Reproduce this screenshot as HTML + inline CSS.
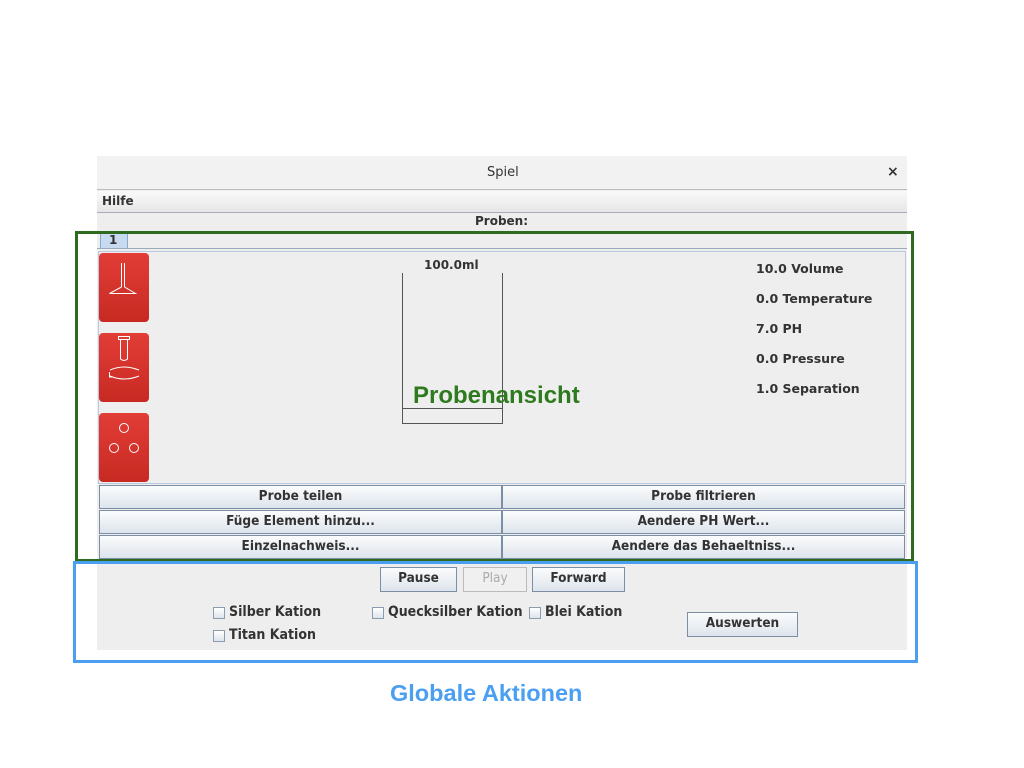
<!DOCTYPE html><html><head><style>
*{margin:0;padding:0;box-sizing:border-box}
body{width:1024px;height:768px;background:#fff;position:relative;overflow:hidden;font-family:"DejaVu Sans","Liberation Sans",sans-serif;font-size:12px;color:#222}
.a{position:absolute}
.t{font-weight:bold;font-size:12px;color:#333;white-space:nowrap}
.btn{position:absolute;background:linear-gradient(#fbfcfd,#dde4ec);border:1px solid #7b8ea3;text-align:center;font-weight:bold;font-size:13.5px;line-height:21px;color:#333;font-family:"DejaVu Sans Condensed","DejaVu Sans",sans-serif}
.red{position:absolute;left:99px;width:50px;height:69px;border-radius:4px;background:linear-gradient(#e23d37,#c72a22)}
.cb{position:absolute;width:12px;height:12px;border:1px solid #8b9bb0;background:linear-gradient(#fff,#dde4ec)}
.lbl{position:absolute;font-weight:bold;font-size:14px;color:#333;font-family:"DejaVu Sans Condensed","DejaVu Sans",sans-serif;white-space:nowrap}
</style></head><body>
<div class="a" style="left:97px;top:156px;width:810px;height:494px;background:#eeeeee"></div>
<div class="a" style="left:97px;top:156px;width:810px;height:34px;background:#f2f2f2;border-bottom:1px solid #bbb"></div>
<div class="a t" style="left:487px;top:165px;font-weight:normal;font-size:13px">Spiel</div>
<div class="a t" style="left:887px;top:164px;font-size:14px">×</div>
<div class="a" style="left:97px;top:191px;width:810px;height:22px;background:linear-gradient(#fafafa,#e6e6e6);border-bottom:1px solid #aab"></div>
<div class="a t" style="left:102px;top:194px">Hilfe</div>
<div class="a t" style="left:475px;top:214px">Proben:</div>
<div class="a" style="left:100px;top:233px;width:28px;height:16px;background:#c8daf0;border:1px solid #8aa8cc;border-bottom:none"></div>
<div class="a t" style="left:109px;top:233px">1</div>
<div class="a" style="left:97px;top:248px;width:810px;height:1px;background:#9ab"></div>
<div class="a" style="left:98px;top:251px;width:808px;height:233px;border:1px solid #b8c8e0;background:#eeeeee"></div>
<div class="red" style="top:253px"></div>
<div class="red" style="top:333px"></div>
<div class="red" style="top:413px"></div>
<svg class="a" style="left:0;top:0" width="1024" height="768" fill="none" stroke="#fff" stroke-width="1">
<path d="M121.5 263V287M124.5 263V287M121.5 287L109.5 293.5H135.5L124.5 287"/>
<path d="M118.5 336.5H129.5V339.5H118.5ZM120.5 339.5V359Q124 362 127.5 359V339.5"/>
<path d="M110 370Q124 364 139 370M139 370L134 368.5M110 376Q124 382 139 376M109.5 372V377H113"/>
<circle cx="124" cy="428" r="4.5"/><circle cx="114" cy="448" r="4.5"/><circle cx="134" cy="448" r="4.5"/>
<g stroke="#555"><path d="M402.5 273V423.5H502.5V273M402.5 408.5H502.5"/></g>
<rect x="76.5" y="232.5" width="836" height="328" stroke="#2e6b1e" stroke-width="3"/>
<rect x="74.5" y="562.5" width="842" height="99" stroke="#4a9ff0" stroke-width="3"/>
</svg>
<div class="a t" style="left:424px;top:258px">100.0ml</div>
<div class="a" style="left:413px;top:382px;font-family:'Liberation Sans',sans-serif;font-weight:bold;font-size:24px;color:#2e7a1e">Probenansicht</div>
<div class="a t" style="left:756px;top:254px;line-height:30px;font-size:12.5px">10.0 Volume<br>0.0 Temperature<br>7.0 PH<br>0.0 Pressure<br>1.0 Separation</div>
<div class="btn" style="left:99px;top:485px;width:403px;height:24px">Probe teilen</div>
<div class="btn" style="left:502px;top:485px;width:403px;height:24px">Probe filtrieren</div>
<div class="btn" style="left:99px;top:510px;width:403px;height:24px">Füge Element hinzu...</div>
<div class="btn" style="left:502px;top:510px;width:403px;height:24px">Aendere PH Wert...</div>
<div class="btn" style="left:99px;top:535px;width:403px;height:24px">Einzelnachweis...</div>
<div class="btn" style="left:502px;top:535px;width:403px;height:24px">Aendere das Behaeltniss...</div>
<div class="btn" style="left:380px;top:567px;width:77px;height:25px">Pause</div>
<div class="btn" style="left:463px;top:567px;width:64px;height:25px;background:#f0f0f0;border-color:#bbb;color:#aaa;font-weight:normal">Play</div>
<div class="btn" style="left:532px;top:567px;width:93px;height:25px">Forward</div>
<div class="btn" style="left:687px;top:612px;width:111px;height:25px">Auswerten</div>
<div class="cb" style="left:213px;top:607px"></div><div class="lbl" style="left:229px;top:604px">Silber Kation</div>
<div class="cb" style="left:372px;top:607px"></div><div class="lbl" style="left:388px;top:604px">Quecksilber Kation</div>
<div class="cb" style="left:529px;top:607px"></div><div class="lbl" style="left:545px;top:604px">Blei Kation</div>
<div class="cb" style="left:213px;top:630px"></div><div class="lbl" style="left:229px;top:627px">Titan Kation</div>
<div class="a" style="left:390px;top:680px;font-family:'Liberation Sans',sans-serif;font-weight:bold;font-size:23.5px;color:#4a9ff0">Globale Aktionen</div>
</body></html>
